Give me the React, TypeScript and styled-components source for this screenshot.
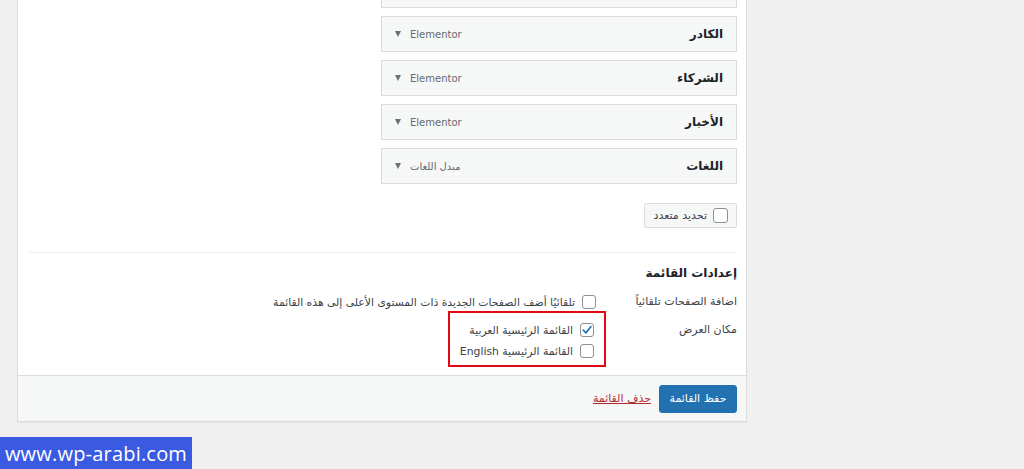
import React from 'react'
import styled, { createGlobalStyle } from 'styled-components'

const GlobalStyle = createGlobalStyle`
  html, body {
    margin: 0;
    padding: 0;
    background: #f0f0f1;
    font-family: 'DejaVu Sans', sans-serif;
    color: #1d2327;
    overflow: hidden;
  }
`

const Page = styled.div`
  position: relative;
  width: 1024px;
  height: 469px;
  overflow: hidden;
  direction: ltr;
`

const Panel = styled.div`
  direction: rtl;
  margin: -40px 0 0 17px;
  width: 730px;
  box-sizing: border-box;
  background: #fff;
  border: 1px solid #dcdcde;
  box-shadow: 0 1px 1px rgba(0, 0, 0, 0.04);
`

const Body = styled.div`
  padding: 11px 9px 0 10px;
`

const ItemList = styled.div`
  display: flex;
  flex-direction: column;
  gap: 8px;
  width: 356px;
`

const Item = styled.div`
  display: flex;
  align-items: center;
  justify-content: space-between;
  height: 36px;
  box-sizing: border-box;
  padding: 0 13px 0 13px;
  background: #f6f7f7;
  border: 1px solid #dcdcde;
`

const ItemTitle = styled.span`
  font-size: 12px;
  font-weight: 700;
  color: #1d2327;
`

const ItemControls = styled.span`
  display: flex;
  align-items: center;
  gap: 9px;
  font-size: 10px;
  color: #646970;
`

const Arrow = styled.span`
  width: 0;
  height: 0;
  border-left: 3.5px solid transparent;
  border-right: 3.5px solid transparent;
  border-top: 6px solid #6d7176;
`

const BulkButton = styled.label`
  display: inline-flex;
  align-items: center;
  gap: 6px;
  margin-top: 19px;
  height: 25px;
  box-sizing: border-box;
  padding: 0 8px 0 9px;
  background: #f6f7f7;
  border: 1px solid #dcdcde;
  border-radius: 2px;
  font-size: 11px;
  color: #3c434a;
`

const Divider = styled.div`
  margin-top: 24px;
  border-top: 1px solid #f0f0f1;
`

const SettingsTitle = styled.h3`
  margin: 12px 0 0;
  font-size: 12px;
  font-weight: 700;
  color: #1d2327;
  line-height: 16px;
`

const SettingRow = styled.div<{ $top: number }>`
  display: flex;
  align-items: flex-start;
  margin-top: ${p => p.$top}px;
`

const SettingLabel = styled.div`
  width: 141px;
  font-size: 11px;
  line-height: 20px;
  color: #3c434a;
`

const Options = styled.div<{ $boxed?: boolean }>`
  display: flex;
  flex-direction: column;
  gap: 1px;
  ${p =>
    p.$boxed &&
    `
    margin: -9px -10px 0 0;
    padding: 7px 10px 4px 10px;
    border: 2px solid #e30613;
  `}
`

const Option = styled.label`
  display: flex;
  align-items: center;
  gap: 7px;
  height: 20px;
  font-size: 10.8px;
  color: #3c434a;
  white-space: nowrap;
`

const Box = styled.span<{ $size?: number }>`
  display: inline-flex;
  align-items: center;
  justify-content: center;
  width: ${p => p.$size ?? 14}px;
  height: ${p => p.$size ?? 14}px;
  box-sizing: border-box;
  border: 1px solid #8c8f94;
  border-radius: 3px;
  background: #fff;
  flex-shrink: 0;
`

const Footer = styled.div`
  display: flex;
  align-items: center;
  gap: 8px;
  margin-top: 8px;
  height: 45px;
  padding: 0 9px 0 10px;
  background: #f6f7f7;
  border-top: 1px solid #dcdcde;
`

const SaveButton = styled.button`
  height: 28px;
  width: 78px;
  padding: 0;
  border: 1px solid #2271b1;
  border-radius: 3px;
  background: #2271b1;
  color: #fff;
  font-family: inherit;
  font-size: 11px;
`

const DeleteLink = styled.a`
  font-size: 11px;
  color: #b32d2e;
  text-decoration: underline;
`

const Watermark = styled.div`
  position: absolute;
  left: 0;
  bottom: 0;
  width: 192px;
  height: 32px;
  display: flex;
  align-items: center;
  justify-content: center;
  background: #3b5ae2;
  color: #fff;
  font-family: 'Open Sans', sans-serif;
  font-size: 20px;
  letter-spacing: 0.2px;
`

const Check = () => (
  <svg width="12" height="12" viewBox="0 0 12 12">
    <path d="M2.3 6.2 L5 8.8 L9.8 2.8" fill="none" stroke="#2271b1" strokeWidth="1.8" strokeLinecap="round" strokeLinejoin="round" />
  </svg>
)

// the first item is scrolled almost out of view; only its lower edge shows
const items = [
  { title: '', type: '' },
  { title: 'الكادر', type: 'Elementor' },
  { title: 'الشركاء', type: 'Elementor' },
  { title: 'الأخبار', type: 'Elementor' },
  { title: 'اللغات', type: 'مبدل اللغات' },
]

export default function App() {
  return (
    <Page>
      <GlobalStyle />
      <Panel>
        <Body>
          <ItemList>
            {items.map((it, i) => (
              <Item key={i}>
                <ItemTitle>{it.title}</ItemTitle>
                {it.type && (
                  <ItemControls>
                    <span>{it.type}</span>
                    <Arrow />
                  </ItemControls>
                )}
              </Item>
            ))}
          </ItemList>
          <BulkButton>
            <Box $size={15} />
            <span>تحديد متعدد</span>
          </BulkButton>
          <Divider />
          <SettingsTitle>إعدادات القائمة</SettingsTitle>
          <SettingRow $top={11}>
            <SettingLabel>اضافة الصفحات تلقائياً</SettingLabel>
            <Options>
              <Option>
                <Box />
                <span>تلقائيًا أضف الصفحات الجديدة ذات المستوى الأعلى إلى هذه القائمة</span>
              </Option>
            </Options>
          </SettingRow>
          <SettingRow $top={8}>
            <SettingLabel>مكان العرض</SettingLabel>
            <Options $boxed>
              <Option>
                <Box>
                  <Check />
                </Box>
                <span>القائمة الرئيسية العربية</span>
              </Option>
              <Option>
                <Box />
                <span>القائمة الرئيسية English</span>
              </Option>
            </Options>
          </SettingRow>
        </Body>
        <Footer>
          <SaveButton>حفظ القائمة</SaveButton>
          <DeleteLink>حذف القائمة</DeleteLink>
        </Footer>
      </Panel>
      <Watermark>www.wp-arabi.com</Watermark>
    </Page>
  )
}
